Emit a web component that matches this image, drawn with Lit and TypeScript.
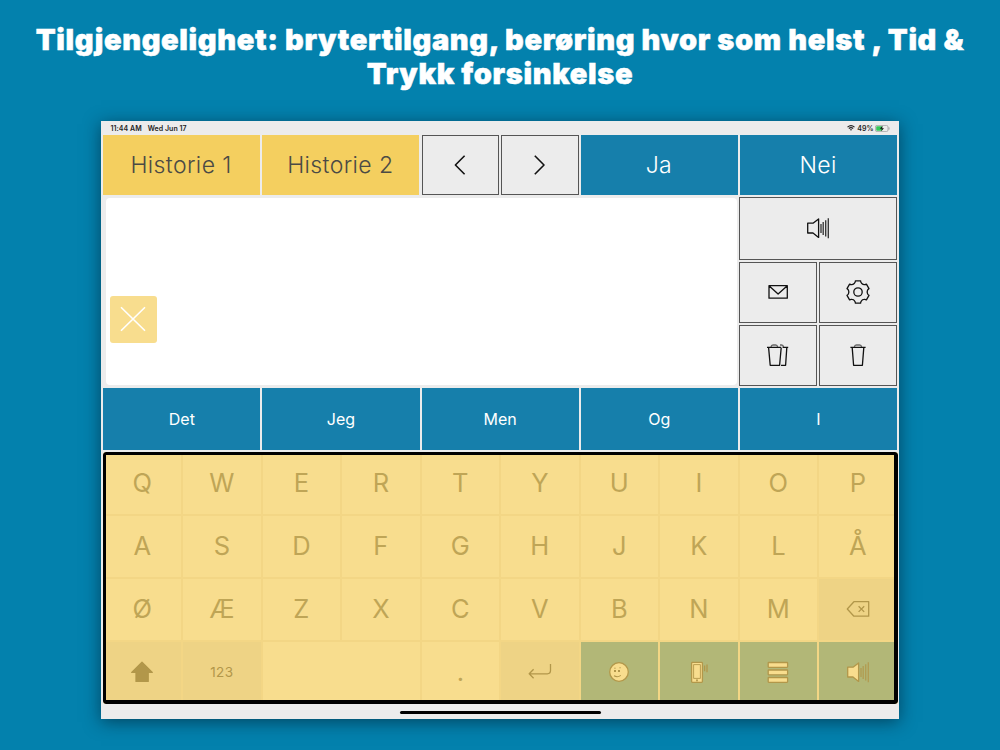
import { LitElement, css, html, svg, nothing } from 'lit';
import { customElement, property } from 'lit/decorators.js';
import { classMap } from 'lit/directives/class-map.js';

type KeyKind = 'letter' | 'modifier' | 'action';

interface Key {
    label?: string;
    icon?: string;
    kind?: KeyKind;
    wide?: boolean;
    small?: boolean;
}

// Outline of the settings cog: six teeth around the centre
const cogPath = (): string => {
    const point = (radius: number, degrees: number) => {
        const angle = (degrees * Math.PI) / 180;
        return `${(16 + radius * Math.sin(angle)).toFixed(2)} ${(16 - radius * Math.cos(angle)).toFixed(2)}`;
    };
    let path = '';

    for (let i = 0; i < 6; i++) {
        const a = i * 60;
        path += `${i === 0 ? 'M' : 'L'}${point(11.5, a - 13)} L${point(11.5, a + 13)} `;
        path += `Q${point(10, a + 15)} ${point(9.6, a + 21)} `;
        path += `Q${point(8.8, a + 30)} ${point(9.6, a + 39)} `;
        path += `Q${point(10, a + 45)} ${point(11.5, a + 47)} `;
    }

    return `${path}Z`;
};

// All icons are drawn on a 32 x 32 grid
const icons: Record<string, unknown> = {
    previous: svg`<path d="M20.6 6.8 L11.4 16 L20.6 25.2" stroke-width="1.6"/>`,
    next: svg`<path d="M10.8 6.8 L20 16 L10.8 25.2" stroke-width="1.6"/>`,
    speaker: svg`
        <path class="fill" d="M5.7 11.2 H11 L16.6 6.9 V25.4 L11 21 H5.7 Z"/>
        <path d="M19 12 V21 M21.2 10 V23 M23.7 8.2 V24.6 M26.3 6.2 V26.2" opacity=".85"/>`,
    mail: svg`<path d="M7 9.7 H25.3 V22.2 H7 Z M7 9.7 L16.1 18 L25.3 9.7"/>`,
    settings: svg`<path d="${cogPath()}"/><circle cx="16" cy="16" r="4.2"/>`,
    trash: svg`
        <path d="M8.4 8.4 H23.6 M10.2 8.6 L11.6 26.3 H20.4 L21.8 8.6"/>
        <path d="M12.4 8 Q12.6 6 14.4 6 H17.6 Q19.4 6 19.6 8" opacity=".6"/>`,
    trashAll: svg`
        <path d="M5 8.4 H19.2 M6.6 8.6 L8.2 26.3 H17.6 L19.2 8.6 M20.6 8.4 H26.2 M24.8 8.6 L23.6 26.3 H19"/>
        <path d="M9 8 Q9.2 6 11 6 H13.6 Q15.4 6 15.6 8 M18 6 H19.6 Q21.2 6.2 21.6 8" opacity=".6"/>`,
    close: svg`<path d="M4 4.2 L28 27.8 M28 4.2 L4 27.8" stroke-width="1.6"/>`,
    shift: svg`<path class="solid" d="M16 6.2 L26.3 16.4 H22.2 V25.4 H10 V16.4 H5.7 Z"/>`,
    enter: svg`<path d="M26.5 8 V14.6 Q26.5 17.8 23.3 17.8 H5.2 M9.6 13.3 L5.2 17.8 L9.6 22.2"/>`,
    backspace: svg`<path d="M5.3 16 L11.9 8.7 H26.7 V23.2 H11.9 Z M16.6 13.2 L22.2 18.9 M22.2 13.2 L16.6 18.9"/>`,
    smiley: svg`
        <circle class="fill" cx="16" cy="16" r="9.3"/>
        <rect class="solid" x="11" y="14" width="2" height="2" stroke="none"/>
        <rect class="solid" x="15" y="14" width="2" height="2" stroke="none"/>
        <path d="M11 19.8 Q14.5 21.8 17.8 19.4" stroke-width="1.1"/>
        <path d="M11 12.2 H12.8 M16.2 11.9 Q17.2 11.3 18 12" stroke-width=".7"/>`,
    phone: svg`
        <rect class="fill" x="8.6" y="6.4" width="10.8" height="20" rx=".8"/>
        <path d="M10.6 8.6 H17.4 V22.4 H10.6 Z" stroke-width=".9"/>
        <circle class="solid" cx="14" cy="24.4" r=".4"/>
        <path d="M21.6 9.6 V15.2 M24 8.6 V16.2"/>`,
    menu: svg`
        <rect class="fill" x="6.2" y="6.5" width="19.4" height="4.8" rx=".5"/>
        <rect class="fill" x="6.2" y="14" width="19.4" height="4.8" rx=".5"/>
        <rect class="fill" x="6.2" y="21.5" width="19.4" height="4.8" rx=".5"/>`,
};

const letters = (row: string): Key[] => [...row].map((label) => ({ label }));

const KEYS: Key[] = [
    ...letters('QWERTYUIOP'),
    ...letters('ASDFGHJKLÅ'),
    ...letters('ØÆZXCVBNM'),
    { icon: 'backspace', kind: 'modifier' },
    { icon: 'shift', kind: 'modifier' },
    { label: '123', kind: 'modifier', small: true },
    { wide: true },
    { label: '.' },
    { icon: 'enter', kind: 'modifier' },
    { icon: 'smiley', kind: 'action' },
    { icon: 'phone', kind: 'action' },
    { icon: 'menu', kind: 'action' },
    { icon: 'speaker', kind: 'action' },
];

@customElement('speech-icon')
export class SpeechIcon extends LitElement {
    @property() name = '';

    static styles = css`
        :host {
          display: block;
          width: 32px;
          height: 32px;
        }

        svg {
          display: block;
          width: 100%;
          height: 100%;
          fill: none;
          stroke: currentColor;
          stroke-width: 1.3;
          stroke-linejoin: round;
        }

        .fill {
          fill: var(--icon-fill, none);
        }

        .solid {
          fill: currentColor;
        }
    `;

    render() {
        return html`<svg viewBox="0 0 32 32">${icons[this.name]}</svg>`;
    }
}

@customElement('speech-keyboard')
export class SpeechKeyboard extends LitElement {
    static styles = css`
        :host {
          display: grid;
          grid-template-columns: repeat(10, 1fr);
          grid-template-rows: repeat(4, 63px);
          position: relative;
          overflow: hidden;
          border-radius: 3px;
          background: #f3d685;
        }

        /* Scanning frame lies over the outer edge of the keys */
        :host::after {
          content: '';
          position: absolute;
          inset: 0;
          border: solid #000;
          border-width: 3px 4px 4px 3px;
          border-radius: 3px;
        }

        .key {
          display: flex;
          align-items: center;
          justify-content: center;
          margin: 1px;
          padding-bottom: 2px;
          background: #f8dd8e;
          color: #bfa556;
          font-size: 25.5px;
        }

        .wide {
          grid-column: span 2;
        }

        .modifier {
          background: #eed385;
          color: #b2974a;
        }

        .action {
          background: #b2b777;
          color: #b2974a;
          --icon-fill: #f8dd8e;
        }

        .small {
          font-size: 13.5px;
          letter-spacing: .4px;
        }
    `;

    private renderKey(key: Key) {
        const classes = {
            key: true,
            modifier: key.kind === 'modifier',
            action: key.kind === 'action',
            wide: !!key.wide,
            small: !!key.small,
        };

        return html`
            <div class=${classMap(classes)}>
                ${key.icon ? html`<speech-icon name=${key.icon}></speech-icon>` : key.label ?? nothing}
            </div>
        `;
    }

    render() {
        return KEYS.map((key) => this.renderKey(key));
    }
}

@customElement('app-root')
export class AppRoot extends LitElement {
    static styles = css`
        :host {
          display: flex;
          flex-direction: column;
          align-items: center;
          box-sizing: border-box;
          width: 1000px;
          height: 750px;
          padding-top: 23px;
          overflow: hidden;
          background: #0381ad;
          font-family: Inter, 'Open Sans', sans-serif;
        }

        h1 {
          margin: 0;
          height: 98px;
          color: #fff;
          font-size: 29px;
          font-weight: 900;
          letter-spacing: .65px;
          line-height: 34px;
          text-align: center;
          white-space: nowrap;
          -webkit-text-stroke: .5px #fff;
        }

        .device {
          display: flex;
          flex-direction: column;
          box-sizing: border-box;
          width: 798px;
          height: 598px;
          background: #ececec;
          box-shadow: 0 3px 16px rgba(0, 20, 35, .55);
        }

        .status {
          display: flex;
          align-items: center;
          height: 14px;
          padding: 0 9px 0 9.5px;
          color: #222;
          font-size: 7px;
          font-weight: 600;
          letter-spacing: .05px;
        }

        .status .date {
          flex: 1;
          margin-left: 6px;
        }

        .wifi {
          width: 8px;
          height: 6px;
          margin-right: 2px;
        }

        .battery {
          width: 15px;
          height: 7px;
          margin-left: 1.5px;
        }

        .history {
          display: grid;
          grid-template-columns: repeat(10, 1fr);
          gap: 2.2px;
          height: 60px;
          padding: 0 1.8px 0 2px;
          margin-bottom: 2px;
        }

        .cell {
          display: flex;
          align-items: center;
          justify-content: center;
          box-sizing: border-box;
        }

        .double {
          grid-column: span 2;
        }

        .story {
          padding-right: 1px;
          background: #f4cf5f;
          color: #4b4a45;
          font-size: 23px;
          font-weight: 300;
          letter-spacing: .4px;
        }

        .answer {
          padding-right: 1px;
          background: #167fab;
          color: #fff;
          font-size: 23px;
          font-weight: 300;
          letter-spacing: .4px;
        }

        .tool {
          border: solid 1px #555;
          color: #111;
        }

        .workspace {
          display: flex;
          height: 189px;
          padding: 0 2px 0 5.4px;
          margin-bottom: 2px;
        }

        .message {
          display: flex;
          align-items: flex-start;
          box-sizing: border-box;
          width: 630.6px;
          margin: 1px 2px 1px 0;
          padding: 98px 3.6px 0;
          border-radius: 4px;
          background: #fff;
        }

        .dismiss {
          display: flex;
          align-items: center;
          justify-content: center;
          box-sizing: border-box;
          width: 47px;
          height: 47px;
          padding-bottom: 1px;
          border-radius: 3px;
          background: #f8dd8e;
          color: #fff;
        }

        .tools {
          flex: 1;
          display: grid;
          grid-template-columns: 1fr 1fr;
          grid-template-rows: 63px 61px 61px;
          gap: 2px;
        }

        .tools .tool {
          padding-bottom: 1px;
        }

        .predictions {
          display: grid;
          grid-template-columns: repeat(5, 1fr);
          gap: 2px;
          height: 62px;
          padding: 0 2px 0 2.3px;
          margin-bottom: 2px;
        }

        .prediction {
          background: #167fab;
          color: #fff;
          font-size: 16px;
        }

        speech-keyboard {
          margin: 0 1.4px 0 1.6px;
        }

        .home {
          width: 201px;
          height: 3px;
          margin: 7px auto 0;
          border-radius: 2px;
          background: #000;
        }
    `;

    render() {
        return html`
            <h1>Tilgjengelighet: brytertilgang, berøring hvor som helst , Tid &amp;<br>Trykk forsinkelse</h1>
            <div class="device">
                <div class="status">
                    <span>11:44 AM</span>
                    <span class="date">Wed Jun 17</span>
                    <svg class="wifi" viewBox="0 0 8 6" fill="none" stroke="#222" stroke-width="1.1">
                        <path d="M.5 2.1 Q4 -.9 7.5 2.1 M1.8 3.5 Q4 1.7 6.2 3.5"/>
                        <path d="M4 5.8 L2.8 4.6 Q4 3.8 5.2 4.6 Z" fill="#222" stroke="none"/>
                    </svg>
                    <span>49%</span>
                    <svg class="battery" viewBox="0 0 15 7">
                        <rect x=".4" y=".4" width="12.6" height="6.2" rx="1.6" fill="none" stroke="#999" stroke-width=".7"/>
                        <rect x="1.2" y="1.2" width="6" height="4.6" rx=".8" fill="#35c759"/>
                        <path d="M7.6 .8 L4.8 3.8 H6.8 L6.2 6.2 L9 3.2 H7.1 Z" fill="#111"/>
                        <path d="M14 2.4 V4.6" stroke="#999" stroke-width=".9"/>
                    </svg>
                </div>
                <div class="history">
                    <div class="cell double story">Historie 1</div>
                    <div class="cell double story">Historie 2</div>
                    <div class="cell tool"><speech-icon name="previous"></speech-icon></div>
                    <div class="cell tool"><speech-icon name="next"></speech-icon></div>
                    <div class="cell double answer">Ja</div>
                    <div class="cell double answer">Nei</div>
                </div>
                <div class="workspace">
                    <div class="message">
                        <div class="dismiss"><speech-icon name="close"></speech-icon></div>
                    </div>
                    <div class="tools">
                        <div class="cell tool double"><speech-icon name="speaker"></speech-icon></div>
                        <div class="cell tool"><speech-icon name="mail"></speech-icon></div>
                        <div class="cell tool"><speech-icon name="settings"></speech-icon></div>
                        <div class="cell tool"><speech-icon name="trashAll"></speech-icon></div>
                        <div class="cell tool"><speech-icon name="trash"></speech-icon></div>
                    </div>
                </div>
                <div class="predictions">
                    ${['Det', 'Jeg', 'Men', 'Og', 'I'].map((word) => html`<div class="cell prediction">${word}</div>`)}
                </div>
                <speech-keyboard></speech-keyboard>
                <div class="home"></div>
            </div>
        `;
    }
}
